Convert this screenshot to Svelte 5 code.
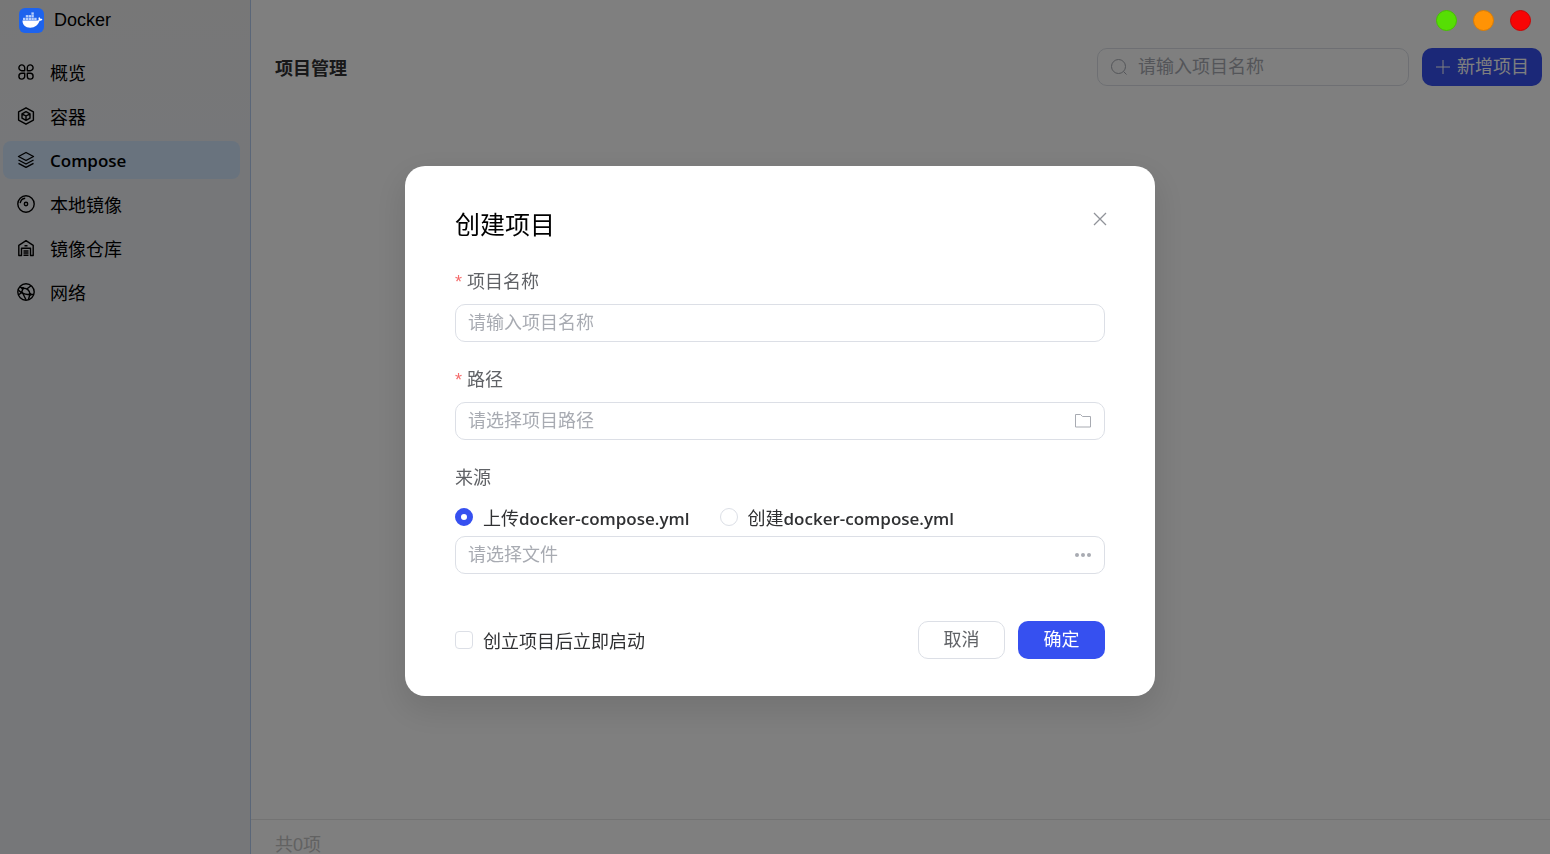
<script lang="ts">
	interface MenuItem {
		key: string;
		label: string;
	}

	const menu: MenuItem[] = [
		{ key: 'overview', label: '概览' },
		{ key: 'container', label: '容器' },
		{ key: 'compose', label: 'Compose' },
		{ key: 'image', label: '本地镜像' },
		{ key: 'registry', label: '镜像仓库' },
		{ key: 'network', label: '网络' }
	];

	let active = $state('compose');
	let keyword = $state('');
	let dialogVisible = $state(true);

	let name = $state('');
	let path = $state('');
	let source = $state('upload');
	let file = $state('');
	let startNow = $state(false);

	function closeDialog() {
		dialogVisible = false;
	}

	function openDialog() {
		dialogVisible = true;
	}
</script>

<div class="layout">
	<aside class="sidebar">
		<div class="brand">
			<svg class="logo" viewBox="0 0 25 25" aria-hidden="true">
				<rect width="25" height="25" rx="6" fill="#1d63ed" />
				<path
					d="M3.5 12.6h14.8c.9 0 1.3-.4 1.5-.8-.5-.9-.4-2 .3-2.9.8.6 1.2 1.2 1.3 1.9.8-.1 1.5 0 2 .4-.5 1.2-1.5 1.6-2.800 1.6-1.400 4-4.500 6.900-9.400 6.900-4.800 0-7.700-2.400-7.700-7.100z"
					fill="#fff"
				/>
				<g fill="#b9d0fb">
					<rect x="4" y="9.8" width="2.4" height="2.3" />
					<rect x="6.8" y="9.8" width="2.4" height="2.3" />
					<rect x="9.6" y="9.8" width="2.4" height="2.3" />
					<rect x="12.4" y="9.8" width="2.4" height="2.3" />
					<rect x="15.2" y="9.8" width="2.4" height="2.3" />
					<rect x="6.8" y="7.1" width="2.4" height="2.3" />
					<rect x="9.6" y="7.1" width="2.4" height="2.3" />
					<rect x="12.4" y="7.1" width="2.4" height="2.3" />
					<rect x="12.4" y="4.4" width="2.4" height="2.3" />
				</g>
			</svg>
			<span>Docker</span>
		</div>

		<nav class="menu">
			{#each menu as item}
				<button class="menu-item" class:active={active === item.key} onclick={() => (active = item.key)}>
					<svg viewBox="0 0 18 18" aria-hidden="true">
						{#if item.key === 'overview'}
							<path
								d="M7.7 7.7H4.8A2.9 2.9 0 1 1 7.7 4.8zM10.3 7.7V4.8A2.9 2.9 0 1 1 13.2 7.7zM7.7 10.3V13.2A2.9 2.9 0 1 1 4.8 10.3zM10.3 10.3H13.2A2.9 2.9 0 1 1 10.3 13.2z"
							/>
						{:else if item.key === 'container'}
							<path d="M9 .8l7.4 4.1v8.2L9 17.2l-7.4-4.1V4.9z" />
							<path d="M9 4.6l4 2.2v4.4l-4 2.2-4-2.2V6.8zM5 6.8L9 9l4-2.2M9 9v4.4" />
						{:else if item.key === 'compose'}
							<path d="M9 1.5l7.5 4L9 9.5l-7.5-4z" />
							<path d="M1.5 9L9 13l7.5-4M1.5 12.3l7.5 4 7.5-4" />
						{:else if item.key === 'image'}
							<circle cx="9" cy="9" r="8.2" />
							<circle cx="9" cy="9" r="1.7" />
							<path d="M3.2 8.2a5.8 5.8 0 0 1 5-5" />
						{:else if item.key === 'registry'}
							<path d="M1.8 16.5V6.3L9 1.6l7.2 4.7v10.2h-2.7V9.3h-9v7.2z" />
							<path d="M7.5 6.7h3M6.5 12h5M6.5 14h5M6.5 16.3h5" />
						{:else}
							<circle cx="9" cy="9" r="8.2" />
							<path
								d="M5.8 5.3c4-.5 7 2 7.2 6M5.8 5.3L3 4M5.8 5.3C5.5 8 4 10.5 1.3 11.8M13 11.3c-4 .8-8-.8-11.5-4M13 11.3l3.7.2M13 11.3l-1.5 5M9.5 6.2L14 2.8M5.5 9.8l3.5 7"
							/>
							<circle class="dot" cx="5.8" cy="5.3" r="1.4" />
							<circle class="dot" cx="13" cy="11.3" r="1.5" />
							<circle class="dot" cx="5.2" cy="9.8" r="1" />
						{/if}
					</svg>
					<span class:latin={item.key === 'compose'}>{item.label}</span>
				</button>
			{/each}
		</nav>
	</aside>

	<main class="main">
		<div class="titlebar">
			<button class="win-btn green" aria-label="最小化"></button>
			<button class="win-btn orange" aria-label="最大化"></button>
			<button class="win-btn red" aria-label="关闭"></button>
		</div>

		<header class="toolbar">
			<h1>项目管理</h1>
			<div class="input-box search">
				<svg viewBox="0 0 18 18" aria-hidden="true">
					<circle cx="8.5" cy="8.5" r="7" />
					<path d="M13.5 13.5l3 3" />
				</svg>
				<input type="text" bind:value={keyword} placeholder="请输入项目名称" aria-label="搜索项目" />
			</div>
			<button class="btn primary" onclick={openDialog}>
				<svg viewBox="0 0 16 16" aria-hidden="true"><path d="M8 1v14M1 8h14" /></svg>
				<span>新增项目</span>
			</button>
		</header>

		<section class="content"></section>

		<footer class="total">共0项</footer>
	</main>
</div>

{#if dialogVisible}
	<div class="overlay">
		<div class="dialog" role="dialog" aria-modal="true" aria-labelledby="dialog-title">
			<div class="dialog-header">
				<h2 id="dialog-title">创建项目</h2>
				<button class="close" aria-label="关闭对话框" onclick={closeDialog}>
					<svg viewBox="0 0 14 14" aria-hidden="true"><path d="M1 1l12 12M13 1L1 13" /></svg>
				</button>
			</div>

			<div class="field">
				<label class="required" for="name">项目名称</label>
				<div class="input-box">
					<input id="name" type="text" bind:value={name} placeholder="请输入项目名称" />
				</div>
			</div>

			<div class="field">
				<label class="required" for="path">路径</label>
				<div class="input-box">
					<input id="path" type="text" bind:value={path} placeholder="请选择项目路径" />
					<svg viewBox="0 0 18 18" aria-hidden="true">
						<path d="M1.5 2.5h5l2 2h8v10.5h-15z" />
					</svg>
				</div>
			</div>

			<div class="field">
				<label for="file">来源</label>
				<div class="radios">
					<label class="choice">
						<input type="radio" name="source" value="upload" bind:group={source} />
						<span>上传<span class="latin">docker-compose.yml</span></span>
					</label>
					<label class="choice">
						<input type="radio" name="source" value="create" bind:group={source} />
						<span>创建<span class="latin">docker-compose.yml</span></span>
					</label>
				</div>
				<div class="input-box">
					<input id="file" type="text" bind:value={file} placeholder="请选择文件" />
					<svg class="more" viewBox="0 0 18 18" aria-hidden="true">
						<circle cx="3" cy="9" r="2" />
						<circle cx="9" cy="9" r="2" />
						<circle cx="15" cy="9" r="2" />
					</svg>
				</div>
			</div>

			<div class="dialog-footer">
				<label class="choice">
					<input type="checkbox" bind:checked={startNow} />
					<span>创立项目后立即启动</span>
				</label>
				<div class="actions">
					<button class="btn" onclick={closeDialog}>取消</button>
					<button class="btn primary" onclick={closeDialog}>确定</button>
				</div>
			</div>
		</div>
	</div>
{/if}

<style>
	:global(body) {
		margin: 0;
		font-family: 'Liberation Sans', 'Noto Sans CJK SC', sans-serif;
		font-size: 18px;
		color: #303133;
		background: #fff;
	}

	button,
	input {
		font: inherit;
		box-sizing: border-box;
		margin: 0;
	}

	button {
		cursor: pointer;
	}

	svg {
		flex: none;
		fill: none;
		stroke: currentColor;
	}

	.latin {
		font-family: 'Open Sans', sans-serif;
		font-size: 17px;
		font-weight: 600;
	}

	.layout {
		display: grid;
		grid-template-columns: 251px 1fr;
		height: 100vh;
		overflow: hidden;
	}

	.sidebar {
		box-sizing: border-box;
		border-right: 1px solid #b4cdf0;
		background: linear-gradient(#eeefef, #edeff3 20%, #edeff3);
	}

	.brand {
		display: flex;
		align-items: center;
		gap: 10px;
		height: 40px;
		padding-left: 19px;
		color: #000;
	}

	.logo {
		position: relative;
		z-index: 20;
		width: 25px;
		height: 25px;
		stroke: none;
	}

	.menu {
		display: flex;
		flex-direction: column;
		gap: 6px;
		padding: 13px 10px 0 3px;
	}

	.menu-item {
		display: flex;
		align-items: center;
		gap: 15px;
		height: 38px;
		padding: 0 14px;
		border: none;
		border-radius: 8px;
		background: transparent;
		color: #000;
	}

	.menu-item svg {
		width: 18px;
		height: 18px;
		stroke-width: 1.4;
		stroke-linejoin: round;
	}

	.menu-item .dot {
		fill: #000;
		stroke: none;
	}

	.menu-item.active {
		background: #d2e6fd;
	}

	.main {
		display: flex;
		flex-direction: column;
		min-width: 0;
	}

	/* window buttons stay clickable above the mask */
	.titlebar {
		position: relative;
		z-index: 20;
		display: flex;
		justify-content: flex-end;
		align-items: center;
		gap: 16px;
		height: 40px;
		padding-right: 19px;
	}

	.win-btn {
		width: 21px;
		height: 21px;
		padding: 0;
		border: 1px solid;
		border-radius: 50%;
	}

	.green {
		background: #56de04;
		border-color: #46c000;
	}

	.orange {
		background: #ff9305;
		border-color: #d97c05;
	}

	.red {
		background: #f70505;
		border-color: #c90404;
	}

	.toolbar {
		display: flex;
		align-items: center;
		padding: 8px 8px 0 24px;
	}

	h1 {
		flex: 1;
		margin: 0;
		font-size: 18px;
		font-weight: 700;
	}

	.input-box {
		display: flex;
		align-items: center;
		gap: 10px;
		box-sizing: border-box;
		height: 38px;
		padding: 0 12px;
		border: 1px solid #dcdfe6;
		border-radius: 10px;
		color: #a8abb2;
	}

	.input-box input {
		flex: 1;
		min-width: 0;
		height: 34px;
		padding: 0;
		border: none;
		outline: none;
		background: transparent;
		color: #606266;
	}

	.input-box input::placeholder {
		color: #a8abb2;
		opacity: 1;
	}

	.input-box svg {
		width: 18px;
		height: 18px;
	}

	.input-box .more {
		fill: currentColor;
		stroke: none;
	}

	.search {
		width: 312px;
		margin-right: 13px;
	}

	.btn {
		display: flex;
		align-items: center;
		justify-content: center;
		gap: 6px;
		min-width: 87px;
		height: 38px;
		padding: 0 13px 4px;
		border: 1px solid #dcdfe6;
		border-radius: 10px;
		background: #fff;
		color: #606266;
	}

	.btn.primary {
		border: none;
		background: #3650f0;
		color: #fff;
	}

	.btn svg {
		width: 16px;
		height: 16px;
		margin-top: 4px;
	}

	.content {
		flex: 1;
	}

	.total {
		box-sizing: border-box;
		height: 35px;
		padding: 17px 24px 0;
		line-height: 16px;
		border-top: 1px solid #e6e6e6;
		color: #c4c4c4;
	}

	.overlay {
		position: fixed;
		inset: 0;
		z-index: 10;
		display: flex;
		align-items: center;
		justify-content: center;
		padding: 8px 0 0 10px;
		background: rgba(0, 0, 0, 0.5);
	}

	.dialog {
		box-sizing: border-box;
		width: 750px;
		padding: 38px 50px 37px;
		border-radius: 20px;
		background: #fff;
		box-shadow: 0 12px 32px 4px rgba(0, 0, 0, 0.1);
	}

	.dialog-header {
		display: flex;
		justify-content: space-between;
		margin-bottom: 21px;
	}

	h2 {
		margin: 0;
		font-size: 25px;
		font-weight: 400;
		line-height: 42px;
		color: #000;
	}

	.close {
		display: flex;
		align-items: center;
		justify-content: center;
		width: 30px;
		height: 30px;
		margin-right: -10px;
		padding: 0;
		border: none;
		background: transparent;
		color: #909399;
	}

	.close svg {
		width: 14px;
		height: 14px;
		stroke-width: 1.3;
	}

	.field {
		margin-bottom: 23px;
	}

	.field > label {
		display: block;
		padding-top: 2px;
		margin-bottom: 8px;
		line-height: 27px;
		color: #606266;
	}

	.required::before {
		content: '*';
		margin-right: 5px;
		color: #f56c6c;
	}

	.radios {
		display: flex;
		gap: 30px;
		height: 34px;
		padding-bottom: 2px;
	}

	.choice {
		display: flex;
		align-items: center;
		gap: 10px;
		cursor: pointer;
	}

	.choice input {
		appearance: none;
		width: 18px;
		height: 18px;
		border: 1px solid #dcdfe6;
		background: #fff;
	}

	.choice input[type='radio'] {
		border-radius: 50%;
	}

	.choice input[type='radio']:checked {
		border: 6px solid #3650f0;
	}

	.choice input[type='checkbox'] {
		border-radius: 4px;
	}

	.choice input[type='checkbox']:checked {
		border-color: #3650f0;
		background: #3650f0;
	}

	.dialog-footer {
		display: flex;
		align-items: center;
		justify-content: space-between;
		margin-top: 47px;
	}

	.actions {
		display: flex;
		gap: 13px;
	}
</style>
